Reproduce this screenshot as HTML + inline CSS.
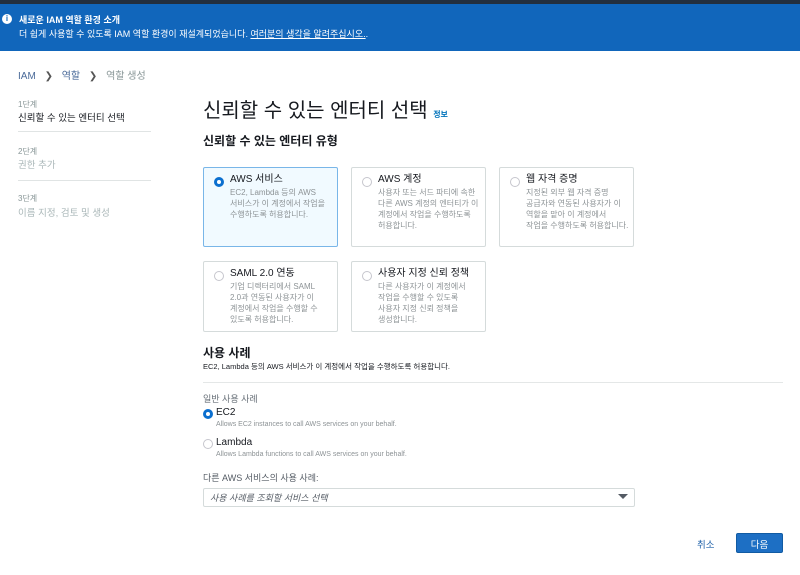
<!DOCTYPE html>
<html><head><meta charset="utf-8"><style>
*{box-sizing:border-box;margin:0;padding:0}
body{width:800px;height:575px;background:#fff;font-family:"Liberation Sans","Noto Sans CJK KR",sans-serif;color:#16191f;position:relative;overflow:hidden}
.a{position:absolute;white-space:nowrap}
.card{position:absolute;width:135px;border:1px solid #d5dbdb;border-radius:2px;background:#fff}
.card.sel{background:#f1faff;border-color:#79b6e8}
.card .t{position:absolute;left:26px;top:6px;font-size:10px;line-height:12px;color:#16191f}
.card .d{position:absolute;left:26px;top:19px;font-size:8px;line-height:11px;color:#8d9396;white-space:normal;width:104px;word-break:keep-all}
.r{position:absolute;width:10px;height:10px;border-radius:50%;border:1px solid #c6c6cd;background:#fff}
.r.on{border:3px solid #0b6fcf}
.card .r{left:10px;top:9px}
.nav{font-size:8px;color:#879596}
</style></head><body>
<div class="a" style="left:0;top:0;width:800px;height:4px;background:#232f3e"></div>
<div class="a" style="left:0;top:4px;width:800px;height:47px;background:#1166bb"></div>
<div class="a" style="left:2px;top:14px;width:10px;height:10px;border-radius:50%;background:#fff;color:#1166bb;font-size:8px;font-weight:bold;text-align:center;line-height:10px">i</div>
<div class="a" style="left:19px;top:13px;font-size:9px;font-weight:bold;color:#fff">새로운 IAM 역할 환경 소개</div>
<div class="a" style="left:19px;top:27px;font-size:9px;color:#fff">더 쉽게 사용할 수 있도록 IAM 역할 환경이 재설계되었습니다. <u>여러분의 생각을 알려주십시오.</u>.</div>
<div class="a" style="left:18px;top:67px;font-size:10px;color:#4a6a99">IAM <span style="color:#555;margin:0 6px">❯</span> 역할 <span style="color:#555;margin:0 6px">❯</span> <span style="color:#879596">역할 생성</span></div>
<div class="a nav" style="left:18px;top:99px">1단계</div>
<div class="a" style="left:18px;top:110px;font-size:9.5px;color:#16191f">신뢰할 수 있는 엔터티 선택</div>
<div class="a" style="left:18px;top:131px;width:133px;height:1px;background:#e0e4e4"></div>
<div class="a nav" style="left:18px;top:146px">2단계</div>
<div class="a" style="left:18px;top:157px;font-size:9.5px;color:#aab7b8">권한 추가</div>
<div class="a" style="left:18px;top:180px;width:133px;height:1px;background:#e0e4e4"></div>
<div class="a nav" style="left:18px;top:193px">3단계</div>
<div class="a" style="left:18px;top:205px;font-size:9.5px;color:#aab7b8">이름 지정, 검토 및 생성</div>
<div class="a" style="left:203px;top:94px;font-size:20px;color:#16191f">신뢰할 수 있는 엔터티 선택 <span style="font-size:8px;color:#0073bb;font-weight:bold">정보</span></div>
<div class="a" style="left:203px;top:132px;font-size:12px;font-weight:bold">신뢰할 수 있는 엔터티 유형</div>

<div class="card sel" style="left:203px;top:167px;height:80px"><div class="r on"></div><div class="t">AWS 서비스</div><div class="d">EC2, Lambda 등의 AWS 서비스가 이 계정에서 작업을 수행하도록 허용합니다.</div></div>
<div class="card" style="left:351px;top:167px;height:80px"><div class="r"></div><div class="t">AWS 계정</div><div class="d">사용자 또는 서드 파티에 속한 다른 AWS 계정의 엔터티가 이 계정에서 작업을 수행하도록 허용합니다.</div></div>
<div class="card" style="left:499px;top:167px;height:80px"><div class="r"></div><div class="t">웹 자격 증명</div><div class="d">지정된 외부 웹 자격 증명 공급자와 연동된 사용자가 이 역할을 맡아 이 계정에서 작업을 수행하도록 허용합니다.</div></div>
<div class="card" style="left:203px;top:261px;height:71px"><div class="r"></div><div class="t">SAML 2.0 연동</div><div class="d">기업 디렉터리에서 SAML 2.0과 연동된 사용자가 이 계정에서 작업을 수행할 수 있도록 허용합니다.</div></div>
<div class="card" style="left:351px;top:261px;height:71px"><div class="r"></div><div class="t">사용자 지정 신뢰 정책</div><div class="d">다른 사용자가 이 계정에서 작업을 수행할 수 있도록 사용자 지정 신뢰 정책을 생성합니다.</div></div>

<div class="a" style="left:203px;top:344px;font-size:12px;font-weight:bold">사용 사례</div>
<div class="a" style="left:203px;top:361px;font-size:7.5px;color:#16191f">EC2, Lambda 등의 AWS 서비스가 이 계정에서 작업을 수행하도록 허용합니다.</div>
<div class="a" style="left:203px;top:382px;width:580px;height:1px;background:#e4e7e7"></div>
<div class="a" style="left:203px;top:392px;font-size:9px;color:#687078">일반 사용 사례</div>
<div class="r on" style="left:203px;top:409px"></div>
<div class="a" style="left:216px;top:406px;font-size:10px;line-height:14px">EC2</div>
<div class="a" style="left:216px;top:421px;font-size:7px;color:#8d9396">Allows EC2 instances to call AWS services on your behalf.</div>
<div class="r" style="left:203px;top:439px"></div>
<div class="a" style="left:216px;top:436px;font-size:10px;line-height:14px">Lambda</div>
<div class="a" style="left:216px;top:451px;font-size:7px;color:#8d9396">Allows Lambda functions to call AWS services on your behalf.</div>
<div class="a" style="left:203px;top:471px;font-size:9px;color:#545b64">다른 AWS 서비스의 사용 사례:</div>
<div class="a" style="left:203px;top:488px;width:432px;height:19px;border:1px solid #d5dbdb;border-radius:2px"></div>
<div class="a" style="left:210px;top:491px;font-size:9px;font-style:italic;color:#545b64">사용 사례를 조회할 서비스 선택</div>
<div class="a" style="left:618px;top:494px;width:0;height:0;border-left:5px solid transparent;border-right:5px solid transparent;border-top:5px solid #545b64"></div>
<div class="a" style="left:697px;top:537px;font-size:9.5px;color:#1c5fa8">취소</div>
<div class="a" style="left:736px;top:533px;width:47px;height:20px;background:#1d6fc4;border:1px solid #115ba3;border-radius:2px"></div>
<div class="a" style="left:736px;top:537px;width:47px;text-align:center;color:#fff;font-size:9.5px">다음</div>
</body></html>
